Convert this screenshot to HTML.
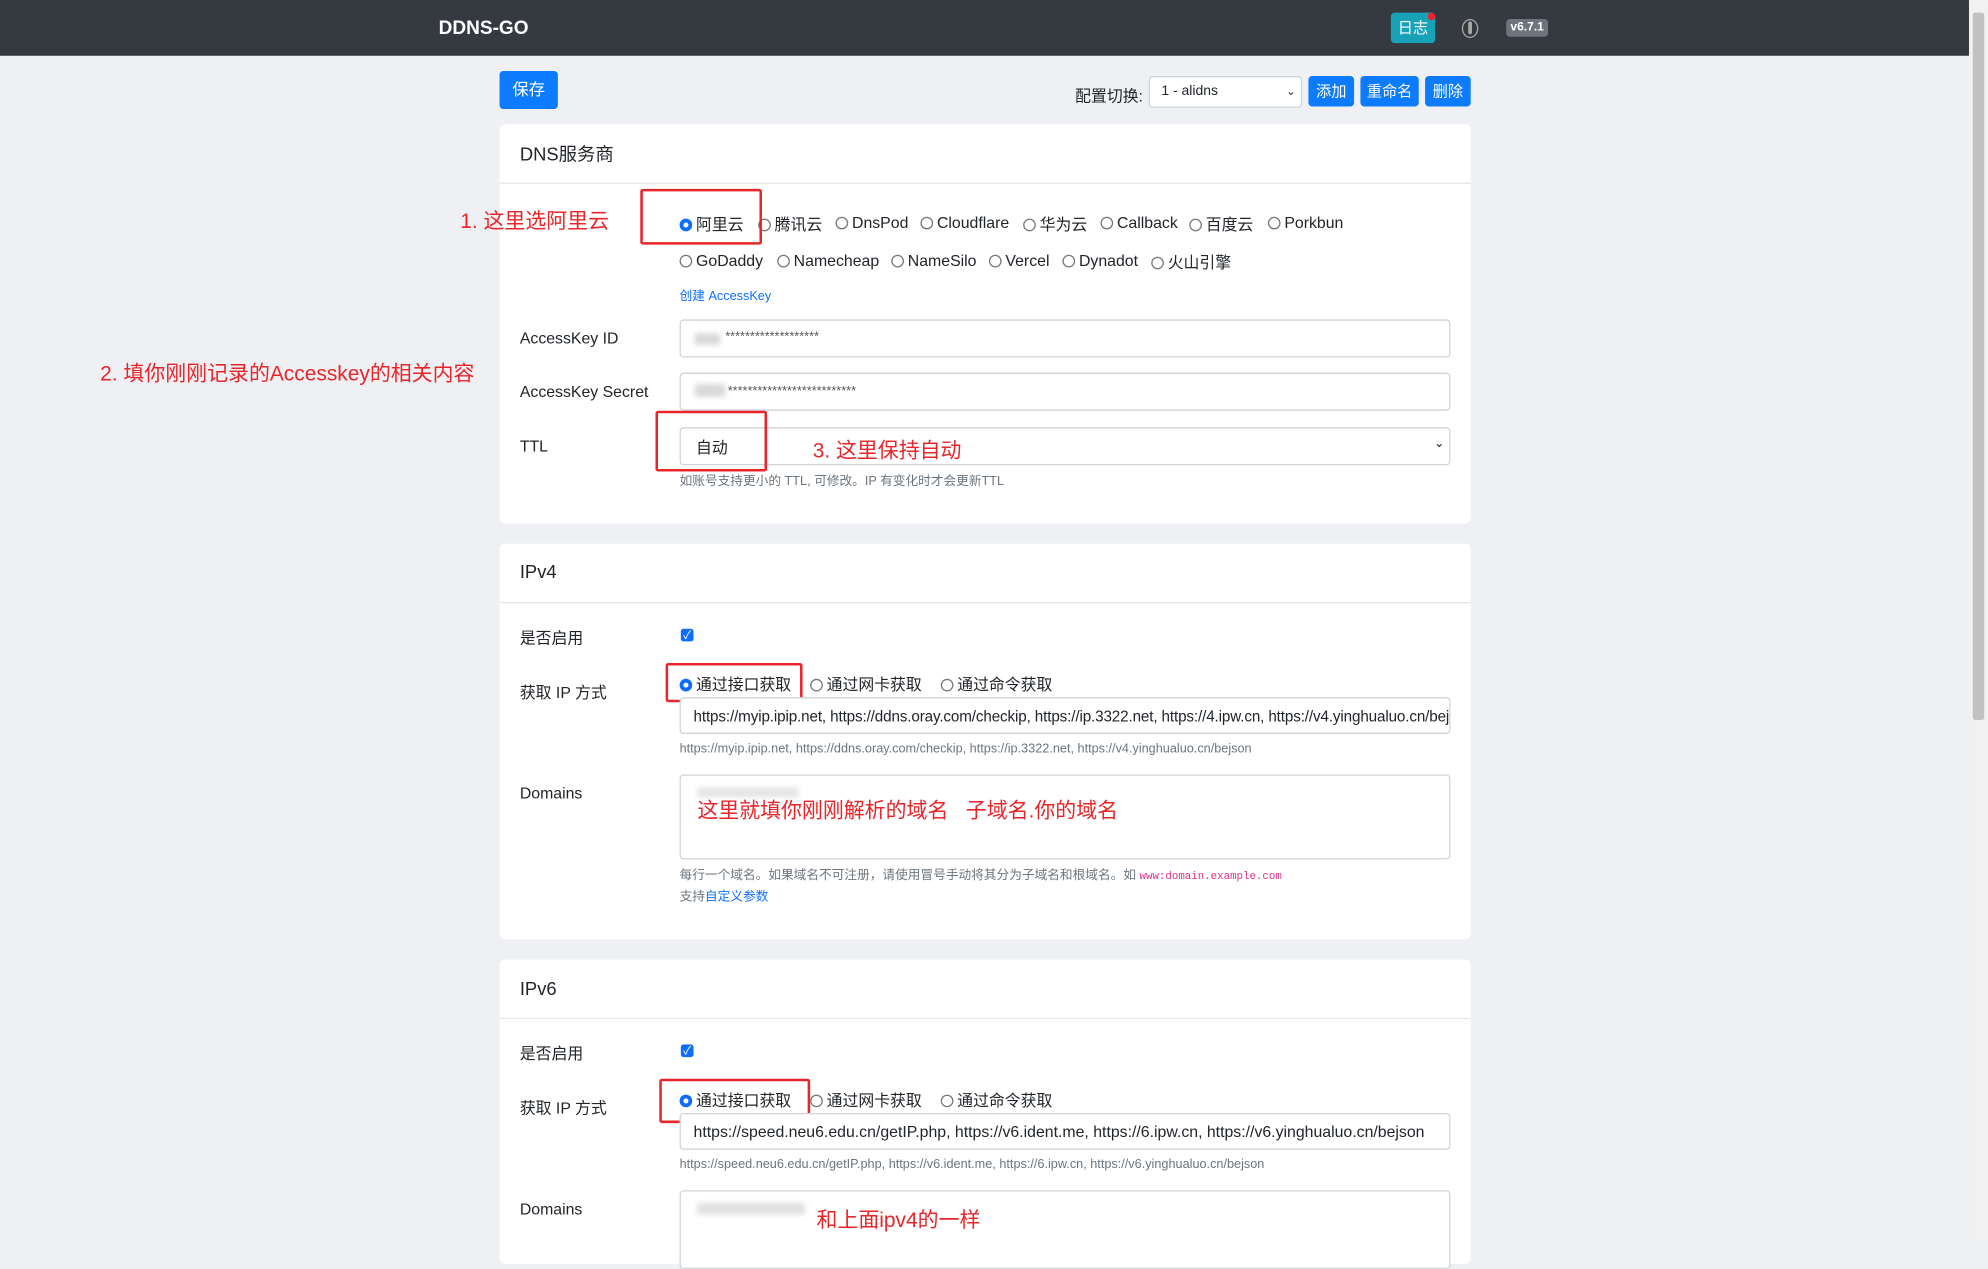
<!DOCTYPE html>
<html><head><meta charset="utf-8"><style>
html,body{margin:0;padding:0;width:1988px;height:1241px;overflow:hidden;background:#eef0f4}
#w{position:absolute;left:0;top:0;width:1568px;height:979px;transform:scale(1.26786,1.2676);transform-origin:0 0;font-family:"Liberation Sans","Noto Sans CJK SC",sans-serif;color:#212529}
.a{position:absolute;white-space:nowrap}
.nav{position:absolute;left:0;top:0;width:1553px;height:44px;background:#343a40}
.btn{position:absolute;background:#0d7bfd;color:#fff;font-size:12px;border-radius:3px;text-align:center}
.card{position:absolute;left:394px;width:766px;background:#fff;border-radius:4px}
.hd{position:absolute;left:0;width:766px;border-bottom:1px solid #e3e6ea}
.inp{position:absolute;left:536px;width:606px;border:1px solid #ced4da;border-radius:3px;background:#fff}
.lbl{position:absolute;left:410px;font-size:12.5px;transform:translateY(-50%)}
.t{position:absolute;font-size:12.5px;transform:translateY(-50%);white-space:nowrap}
.r{display:inline-block;width:8px;height:8px;border:1px solid #777;border-radius:50%;vertical-align:-1px;margin-right:3px}
.rs{display:inline-block;border:3px solid #0d6efd;border-radius:50%;background:#fff;vertical-align:-1px;margin-right:3px;width:4px;height:4px}
.help{position:absolute;left:536px;font-size:10px;color:#6c757d;transform:translateY(-50%);white-space:nowrap}
.red{position:absolute;color:#e8262a;font-size:16.5px;transform:translateY(-50%);white-space:nowrap}
.box{position:absolute;border:2px solid #e8262a;border-radius:2px}
.blur{position:absolute;background:#d8d8d8;filter:blur(2px)}
.cb{position:absolute;left:537px;width:10px;height:10px;background:#0d6efd;border-radius:2px;color:#fff;font-size:9px;line-height:10px;text-align:center}
</style></head><body><div id="w">
<div class="nav"></div>
<div class="a" style="left:346px;top:14px;color:#fff;font-weight:bold;font-size:15px">DDNS-GO</div>
<div class="a" style="left:1097px;top:10px;width:35px;height:24px;background:#17a2b8;border-radius:3px;color:#fff;font-size:12px;text-align:center;line-height:24px">日志</div>
<div class="a" style="left:1126px;top:10px;width:6px;height:6px;background:#e8262a;border-radius:50%"></div>
<div class="a" style="left:1153px;top:15px;width:11px;height:13px;border:1.5px solid #aaa;border-radius:50%"></div>
<div class="a" style="left:1158px;top:17px;width:3px;height:10px;background:#aaa;border-radius:2px"></div>
<div class="a" style="left:1188px;top:15px;width:33px;height:14px;background:#6c757d;border-radius:3px;color:#fff;font-size:9.5px;font-weight:bold;text-align:center;line-height:14px">v6.7.1</div>
<div class="a" style="left:1553px;top:0;width:15px;height:979px;background:#f1f1f1"></div>
<div class="a" style="left:1556px;top:10px;width:9px;height:558px;background:#c1c1c1;border-radius:2px"></div>

<div class="btn" style="left:394px;top:56px;width:46px;height:30px;line-height:30px;font-size:13px">保存</div>
<div class="a" style="left:848px;top:65px;font-size:12.5px">配置切换:</div>
<div class="a" style="left:906px;top:60px;width:119px;height:23px;border:1px solid #ced4da;border-radius:3px;background:#fff;font-size:11px;line-height:23px;text-indent:9px">1 - alidns<span style="position:absolute;right:4px;font-size:9px">⌄</span></div>
<div class="btn" style="left:1032px;top:60px;width:36px;height:24px;line-height:24px">添加</div>
<div class="btn" style="left:1073px;top:60px;width:46px;height:24px;line-height:24px">重命名</div>
<div class="btn" style="left:1124px;top:60px;width:36px;height:24px;line-height:24px">删除</div>

<div class="card" style="top:98px;height:315px"><div class="hd" style="top:0;height:46px"></div></div>
<div class="t" style="left:410px;top:121px;font-size:14.5px">DNS服务商</div>
<div class="t" style="left:536px;top:176px"><span class="rs"></span>阿里云</div>
<div class="t" style="left:598px;top:176px"><span class="r"></span>腾讯云</div>
<div class="t" style="left:659px;top:176px"><span class="r"></span>DnsPod</div>
<div class="t" style="left:726px;top:176px"><span class="r"></span>Cloudflare</div>
<div class="t" style="left:807px;top:176px"><span class="r"></span>华为云</div>
<div class="t" style="left:868px;top:176px"><span class="r"></span>Callback</div>
<div class="t" style="left:938px;top:176px"><span class="r"></span>百度云</div>
<div class="t" style="left:1000px;top:176px"><span class="r"></span>Porkbun</div>
<div class="t" style="left:536px;top:206px"><span class="r"></span>GoDaddy</div>
<div class="t" style="left:613px;top:206px"><span class="r"></span>Namecheap</div>
<div class="t" style="left:703px;top:206px"><span class="r"></span>NameSilo</div>
<div class="t" style="left:780px;top:206px"><span class="r"></span>Vercel</div>
<div class="t" style="left:838px;top:206px"><span class="r"></span>Dynadot</div>
<div class="t" style="left:908px;top:206px"><span class="r"></span>火山引擎</div>
<div class="help" style="top:232px;color:#0d6efd">创建 AccessKey</div>
<div class="lbl" style="top:267px">AccessKey ID</div>
<div class="inp" style="top:252px;height:28px"></div>
<div class="blur" style="left:548px;top:263px;width:20px;height:9px"></div>
<div class="t" style="left:572px;top:266px;font-size:10px;color:#555">*******************</div>
<div class="lbl" style="top:309px">AccessKey Secret</div>
<div class="inp" style="top:294px;height:28px"></div>
<div class="blur" style="left:548px;top:303px;width:24px;height:10px"></div>
<div class="t" style="left:574px;top:309px;font-size:10px;color:#555">**************************</div>
<div class="lbl" style="top:352px">TTL</div>
<div class="inp" style="top:337px;height:28px"></div>
<div class="t" style="left:549px;top:352px;font-size:12.5px">自动</div>
<div class="t" style="left:1131px;top:350px;font-size:10px">⌄</div>
<div class="help" style="top:378px">如账号支持更小的 TTL, 可修改。IP 有变化时才会更新TTL</div>
<div class="red" style="left:363px;top:173px">1. 这里选阿里云</div>
<div class="box" style="left:505px;top:149px;width:92px;height:40px"></div>
<div class="red" style="left:79px;top:293px">2. 填你刚刚记录的Accesskey的相关内容</div>
<div class="box" style="left:517px;top:324px;width:84px;height:44px"></div>
<div class="red" style="left:641px;top:354px">3. 这里保持自动</div>

<div class="card" style="top:429px;height:312px"><div class="hd" style="top:0;height:46px"></div></div>
<div class="t" style="left:410px;top:452px;font-size:14.5px">IPv4</div>
<div class="lbl" style="top:502px">是否启用</div>
<div class="cb" style="top:496px">✓</div>
<div class="lbl" style="top:545px">获取 IP 方式</div>
<div class="t" style="left:536px;top:539px"><span class="rs"></span>通过接口获取</div>
<div class="t" style="left:639px;top:539px"><span class="r"></span>通过网卡获取</div>
<div class="t" style="left:742px;top:539px"><span class="r"></span>通过命令获取</div>
<div class="box" style="left:525px;top:523px;width:104px;height:27px"></div>
<div class="inp" style="top:550px;height:27px;overflow:hidden"><div class="t" style="left:10px;top:14px;font-size:12px;letter-spacing:-0.1px">https://myip.ipip.net, https://ddns.oray.com/checkip, https://ip.3322.net, https://4.ipw.cn, https://v4.yinghualuo.cn/bejson</div></div>
<div class="help" style="top:591px">https://myip.ipip.net, https://ddns.oray.com/checkip, https://ip.3322.net, https://v4.yinghualuo.cn/bejson</div>
<div class="lbl" style="top:626px">Domains</div>
<div class="inp" style="top:611px;height:65px"></div>
<div class="blur" style="left:550px;top:621px;width:80px;height:8px;background:#e4e4e4"></div>
<div class="red" style="left:550px;top:638px">这里就填你刚刚解析的域名 &nbsp;&nbsp;子域名.你的域名</div>
<div class="help" style="top:689px">每行一个域名。如果域名不可注册，请使用冒号手动将其分为子域名和根域名。如 <span style="font-family:'Liberation Mono',monospace;color:#d63384;font-size:8.5px">www:domain.example.com</span></div>
<div class="help" style="top:706px">支持<span style="color:#0d6efd">自定义参数</span></div>

<div class="card" style="top:757px;height:240px"><div class="hd" style="top:0;height:46px"></div></div>
<div class="t" style="left:410px;top:781px;font-size:14.5px">IPv6</div>
<div class="lbl" style="top:830px">是否启用</div>
<div class="cb" style="top:824px">✓</div>
<div class="lbl" style="top:873px">获取 IP 方式</div>
<div class="t" style="left:536px;top:867px"><span class="rs"></span>通过接口获取</div>
<div class="t" style="left:639px;top:867px"><span class="r"></span>通过网卡获取</div>
<div class="t" style="left:742px;top:867px"><span class="r"></span>通过命令获取</div>
<div class="box" style="left:520px;top:851px;width:115px;height:31px"></div>
<div class="inp" style="top:878px;height:27px;overflow:hidden"><div class="t" style="left:10px;top:14px;font-size:12.5px">https://speed.neu6.edu.cn/getIP.php, https://v6.ident.me, https://6.ipw.cn, https://v6.yinghualuo.cn/bejson</div></div>
<div class="help" style="top:919px">https://speed.neu6.edu.cn/getIP.php, https://v6.ident.me, https://6.ipw.cn, https://v6.yinghualuo.cn/bejson</div>
<div class="lbl" style="top:954px">Domains</div>
<div class="inp" style="top:939px;height:60px"></div>
<div class="blur" style="left:550px;top:949px;width:85px;height:9px;background:#e0e0e0"></div>
<div class="red" style="left:644px;top:961px">和上面ipv4的一样</div>
</div></body></html>
